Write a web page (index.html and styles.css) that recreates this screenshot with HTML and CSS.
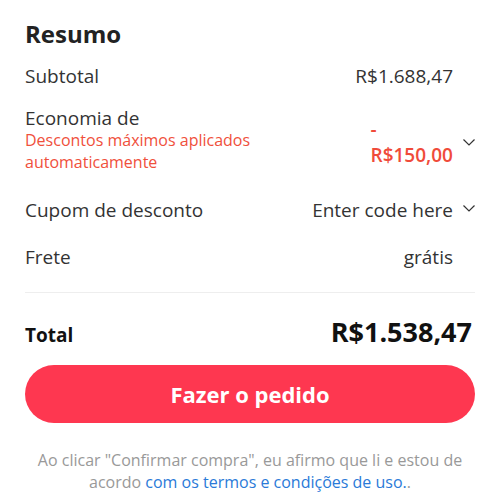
FILE: index.html
```html
<!DOCTYPE html>
<html lang="pt-BR">
<head>
  <meta charset="UTF-8">
  <meta name="viewport" content="width=device-width, initial-scale=1.0">
  <title>Resumo</title>
  <link rel="stylesheet" href="styles.css">
</head>
<body>
  <div class="summary">
    <h2 class="summary-title">Resumo</h2>

    <div class="row row-subtotal">
      <span class="row-label">Subtotal</span>
      <span class="row-value">R$1.688,47</span>
      <span class="row-icon"></span>
    </div>

    <div class="row row-discount">
      <div class="row-label">
        <div class="discount-label">Economia de</div>
        <div class="discount-note">Descontos máximos aplicados automaticamente</div>
      </div>
      <div class="row-value discount-value">
        <div class="discount-dash">-</div>
        <div class="discount-amount">R$150,00</div>
      </div>
      <span class="row-icon icon-discount">
        <svg width="12" height="7" viewBox="0 0 12 7"><path d="M0.5 0.5l5.5 5.5 5.5-5.5" fill="none" stroke="#333" stroke-width="1.2"/></svg>
      </span>
    </div>

    <div class="row row-coupon">
      <span class="row-label">Cupom de desconto</span>
      <span class="row-value">Enter code here</span>
      <span class="row-icon icon-coupon">
        <svg width="12" height="7" viewBox="0 0 12 7"><path d="M0.5 0.5l5.5 5.5 5.5-5.5" fill="none" stroke="#333" stroke-width="1.2"/></svg>
      </span>
    </div>

    <div class="row row-shipping">
      <span class="row-label">Frete</span>
      <span class="row-value">grátis</span>
      <span class="row-icon"></span>
    </div>

    <div class="divider"></div>

    <div class="total">
      <span class="total-label">Total</span>
      <span class="total-value">R$1.538,47</span>
    </div>

    <button class="order-button">Fazer o pedido</button>

    <p class="terms">Ao clicar "Confirmar compra", eu afirmo que li e estou de acordo <a href="#" class="terms-link">com os termos e condições de uso.</a>.</p>
  </div>
</body>
</html>
```

FILE: styles.css
```css
body {
  font-family: "Open Sans", "Noto Sans", sans-serif;
  margin: 0;
  padding: 0;
  background-color: #ffffff;
  color: #333333;
}

.summary {
  width: 450px;
  padding: 18px 25px 0;
}

.summary-title {
  margin: 0;
  font-size: 24px;
  font-weight: 700;
  line-height: 32px;
  color: #222222;
}

/* linhas do resumo */
.row {
  display: flex;
  align-items: flex-start;
  font-size: 19px;
  line-height: 26px;
}

.row-subtotal {
  margin-top: 12.6px;
}

.row-discount {
  margin-top: 18px;
}

.row-coupon {
  margin-top: 24px;
}

.row-shipping {
  margin-top: 21px;
}

.row-label {
  flex: 1;
}

.row-value {
  text-align: right;
}

.row-icon {
  width: 22px;
  display: flex;
  justify-content: flex-end;
}

.icon-discount {
  padding-top: 32px;
}

.icon-coupon {
  padding-top: 8.5px;
}

.discount-label {
  line-height: 22px;
}

.discount-note {
  color: #f0503c;
  font-size: 16px;
  line-height: 22px;
  width: 270px;
}

.discount-value {
  color: #f04b3a;
  font-weight: 600;
  padding-top: 14px;
}

.discount-dash {
  text-align: left;
  line-height: 16px;
}

.discount-amount {
  margin-top: 6px;
  line-height: 24px;
}

.divider {
  height: 1px;
  background: #eeeeee;
  margin-top: 22.4px;
}

.total {
  display: flex;
  justify-content: space-between;
  align-items: baseline;
  padding: 21.5px 3px 0 0;
  line-height: 36px;
}

.total-label {
  font-size: 19px;
  font-weight: 700;
  color: #111111;
}

.total-value {
  font-size: 27px;
  font-weight: 700;
  color: #111111;
}

.order-button {
  display: block;
  width: 100%;
  height: 58px;
  margin-top: 11.5px;
  border: none;
  border-radius: 29px;
  background: #fe3750;
  color: #ffffff;
  font-family: inherit;
  font-size: 22px;
  font-weight: 700;
  cursor: pointer;
}

.terms {
  margin: 25.8px 0 0;
  font-size: 16px;
  line-height: 22px;
  color: #999999;
  text-align: center;
}

.terms-link {
  color: #2a7ad8;
  text-decoration: none;
}
```
